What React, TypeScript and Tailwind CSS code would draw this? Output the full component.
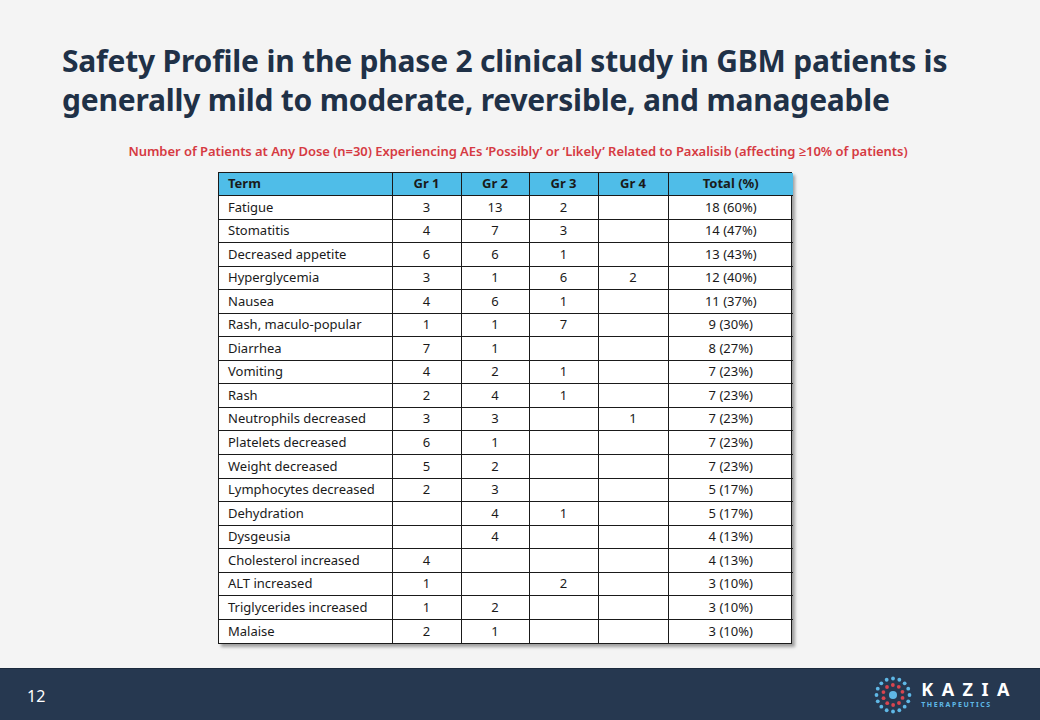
import React from "react";

type Row = [string, string, string, string, string, string];

const ROWS: Row[] = [
  ["Fatigue", "3", "13", "2", "", "18 (60%)"],
  ["Stomatitis", "4", "7", "3", "", "14 (47%)"],
  ["Decreased appetite", "6", "6", "1", "", "13 (43%)"],
  ["Hyperglycemia", "3", "1", "6", "2", "12 (40%)"],
  ["Nausea", "4", "6", "1", "", "11 (37%)"],
  ["Rash, maculo-popular", "1", "1", "7", "", "9 (30%)"],
  ["Diarrhea", "7", "1", "", "", "8 (27%)"],
  ["Vomiting", "4", "2", "1", "", "7 (23%)"],
  ["Rash", "2", "4", "1", "", "7 (23%)"],
  ["Neutrophils decreased", "3", "3", "", "1", "7 (23%)"],
  ["Platelets decreased", "6", "1", "", "", "7 (23%)"],
  ["Weight decreased", "5", "2", "", "", "7 (23%)"],
  ["Lymphocytes decreased", "2", "3", "", "", "5 (17%)"],
  ["Dehydration", "", "4", "1", "", "5 (17%)"],
  ["Dysgeusia", "", "4", "", "", "4 (13%)"],
  ["Cholesterol increased", "4", "", "", "", "4 (13%)"],
  ["ALT increased", "1", "", "2", "", "3 (10%)"],
  ["Triglycerides increased", "1", "2", "", "", "3 (10%)"],
  ["Malaise", "2", "1", "", "", "3 (10%)"],
];

const HEAD = ["Term", "Gr 1", "Gr 2", "Gr 3", "Gr 4", "Total (%)"];
const WIDTHS = ["w-[173px]", "w-[69px]", "w-[68px]", "w-[69px]", "w-[70px]", "w-[125px]"];

function KaziaMark() {
  const dots: React.ReactNode[] = [];
  const cx = 19;
  const cy = 19;
  // outer ring
  for (let i = 0; i < 16; i++) {
    const a = (i / 16) * Math.PI * 2;
    dots.push(
      <circle key={`o${i}`} cx={cx + Math.cos(a) * 16.5} cy={cy + Math.sin(a) * 16.5} r={1.9} fill="#5fb8e6" />
    );
  }
  // inner red ring
  for (let i = 0; i < 10; i++) {
    const a = (i / 10) * Math.PI * 2 + 0.3;
    dots.push(
      <circle key={`r${i}`} cx={cx + Math.cos(a) * 10} cy={cy + Math.sin(a) * 10} r={1.9} fill="#d9454f" />
    );
  }
  return (
    <svg width="38" height="38" viewBox="0 0 38 38">
      {dots}
      <circle cx={cx} cy={cy} r={4} fill="#5fb8e6" />
    </svg>
  );
}

export default function App() {
  return (
    <div
      className="w-[1040px] h-[720px] bg-[#f4f4f4] flex flex-col overflow-hidden"
      style={{ fontFamily: '"Noto Sans", "Open Sans", sans-serif' }}
    >
      <div className="flex-1 flex flex-col">
        {/* Title */}
        <h1 className="pl-[62px] pt-[41px] text-[30px] leading-[39px] font-bold text-[#1f3147] tracking-[-0.2px]">
          Safety Profile in the phase 2 clinical study in GBM patients is
          <br />
          generally mild to moderate, reversible, and manageable
        </h1>

        {/* Subtitle */}
        <p className="mt-[23px] text-center text-[13px] font-semibold text-[#d63a42] pr-[4px] tracking-[-0.05px]">
          Number of Patients at Any Dose (n=30) Experiencing AEs ‘Possibly’ or ‘Likely’ Related to Paxalisib (affecting ≥10% of patients)
        </p>

        {/* Table */}
        <div className="mt-[10px] ml-[218px] w-[574px] bg-white border-[1.5px] border-[#1a1a1a] shadow-[3px_3px_3px_rgba(0,0,0,0.35)]">
          <table className="w-full border-collapse text-[13px] text-[#1a1a1a] table-fixed">
            <thead>
              <tr className="h-[23px] bg-[#4fbde8]">
                {HEAD.map((h, i) => (
                  <th
                    key={h}
                    className={`${WIDTHS[i]} font-bold border-l border-[#1a1a1a] first:border-l-0 ${
                      i === 0 ? "text-left pl-[9px]" : "text-center"
                    }`}
                  >
                    {h}
                  </th>
                ))}
              </tr>
            </thead>
            <tbody>
              {ROWS.map((r) => (
                <tr key={r[0]} className="h-[23.55px] border-t border-[#1a1a1a]">
                  {r.map((c, i) => (
                    <td
                      key={i}
                      className={`border-l border-[#1a1a1a] first:border-l-0 ${
                        i === 0 ? "text-left pl-[9px]" : "text-center"
                      }`}
                    >
                      {c}
                    </td>
                  ))}
                </tr>
              ))}
            </tbody>
          </table>
        </div>
      </div>

      {/* Footer */}
      <div className="h-[52px] bg-[#263850] border-t border-[#1b2a3d] flex items-center justify-between pl-[27px] pr-[22px]">
        <span className="text-white text-[16px] mt-[3px]">12</span>
        <div className="flex items-center gap-[9px]">
          <KaziaMark />
          <div className="flex flex-col">
            <span className="text-white text-[18px] font-bold tracking-[8.5px] leading-[18px]">KAZIA</span>
            <span className="text-[#5fb8e6] text-[7px] font-bold tracking-[1.6px] leading-[10px] mt-[2px]">
              THERAPEUTICS
            </span>
          </div>
        </div>
      </div>
    </div>
  );
}
